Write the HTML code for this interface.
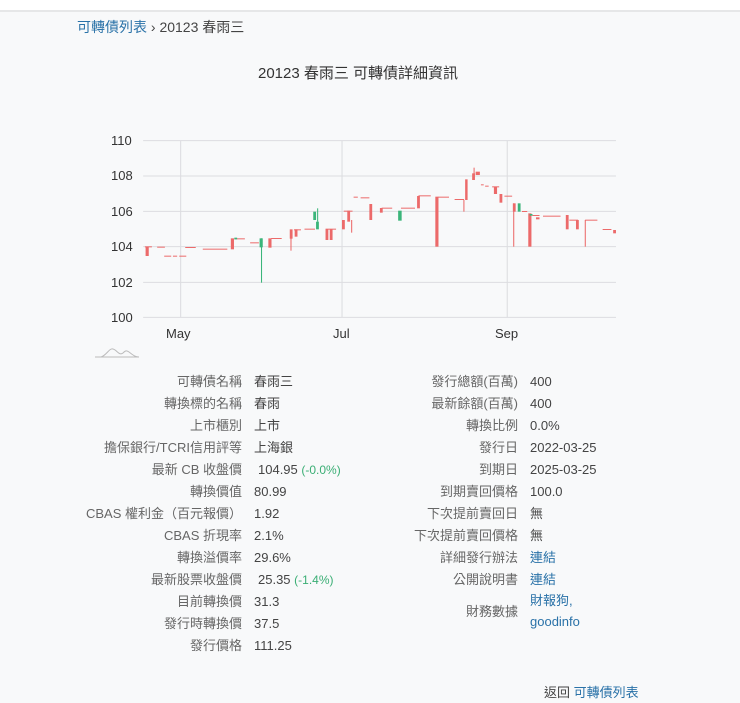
<!DOCTYPE html>
<html><head><meta charset="utf-8"><style>
body{margin:0;width:740px;height:703px;background:#f8f9fa;font-family:"Liberation Sans","Noto Sans CJK TC",sans-serif;position:relative;overflow:hidden;color:#444}
.top{position:absolute;left:0;top:0;width:740px;height:10px;background:#fff;border-bottom:2px solid #e6e7e8}
.t{position:absolute;font-size:13px;line-height:16px;white-space:nowrap}
.l{color:#666;text-align:right;width:200px}
.a{color:#2a72a8}
.g{color:#3aae74;font-size:12px}
.ax{position:absolute;font-size:13px;color:#333}
</style></head><body>
<div class="top"></div>
<div class="t" style="left:77px;top:19px;font-size:14px"><span class="a">可轉債列表</span> › 20123 春雨三</div>
<div class="t" style="left:258px;top:66px;font-size:15px;color:#333">20123 春雨三 可轉債詳細資訊</div>

<div class="ax" style="left:111px;top:133px">110</div>
<div class="ax" style="left:111px;top:168px">108</div>
<div class="ax" style="left:111px;top:204px">106</div>
<div class="ax" style="left:111px;top:239px">104</div>
<div class="ax" style="left:111px;top:275px">102</div>
<div class="ax" style="left:111px;top:310px">100</div>
<div class="ax" style="left:166px;top:326px">May</div>
<div class="ax" style="left:333px;top:326px">Jul</div>
<div class="ax" style="left:495px;top:326px">Sep</div>

<svg style="position:absolute;left:80px;top:120px" width="550" height="250" viewBox="0 0 1568 750" preserveAspectRatio="none">
<g stroke="#dcdde0" stroke-width="3">
<line x1="180" y1="62" x2="1528" y2="62"/><line x1="180" y1="168" x2="1528" y2="168"/><line x1="180" y1="274" x2="1528" y2="274"/><line x1="180" y1="380" x2="1528" y2="380"/><line x1="180" y1="487" x2="1528" y2="487"/><line x1="180" y1="592" x2="1528" y2="592"/>
<line x1="287" y1="62" x2="287" y2="592"/><line x1="747" y1="62" x2="747" y2="592"/><line x1="1218" y1="62" x2="1218" y2="592"/>
</g>
<g fill="#ec6a6a">
<rect x="187" y="380" width="9" height="28"/>
<rect x="185" y="379" width="20" height="3"/><rect x="220" y="380" width="22" height="3"/>
<rect x="240" y="407" width="20" height="3"/><rect x="265" y="407" width="12" height="3"/><rect x="283" y="407" width="20" height="3"/>
<rect x="300" y="381" width="30" height="3"/><rect x="350" y="386" width="70" height="3"/>
<rect x="430" y="355" width="9" height="33"/><rect x="440" y="355" width="30" height="3"/>
<rect x="485" y="367" width="25" height="3"/>
<rect x="537" y="355" width="9" height="28"/><rect x="545" y="354" width="30" height="3"/>
<rect x="598" y="328" width="8" height="28"/><rect x="600" y="355" width="3" height="37"/>
<rect x="612" y="328" width="8" height="22"/><rect x="610" y="328" width="20" height="3"/>
<rect x="640" y="326" width="30" height="3"/>
<rect x="700" y="328" width="8" height="32"/><rect x="712" y="328" width="8" height="32"/><rect x="700" y="326" width="30" height="3"/>
<rect x="747" y="300" width="8" height="28"/><rect x="762" y="272" width="8" height="33"/><rect x="773" y="300" width="3" height="38"/><rect x="752" y="272" width="25" height="3"/>
<rect x="780" y="230" width="12" height="3"/><rect x="800" y="232" width="25" height="3"/>
<rect x="825" y="252" width="8" height="48"/>
<rect x="855" y="264" width="8" height="14"/><rect x="860" y="263" width="30" height="3"/>
<rect x="915" y="263" width="40" height="3"/>
<rect x="961" y="228" width="8" height="37"/><rect x="965" y="226" width="35" height="3"/>
<rect x="1013" y="230" width="9" height="150"/><rect x="1020" y="230" width="32" height="3"/>
<rect x="1068" y="237" width="27" height="3"/><rect x="1093" y="240" width="3" height="35"/>
<rect x="1098" y="178" width="7" height="62"/>
<rect x="1118" y="160" width="8" height="20"/><rect x="1128" y="155" width="12" height="10"/><rect x="1122" y="143" width="3" height="20"/>
<rect x="1143" y="193" width="8" height="3"/><rect x="1155" y="197" width="10" height="3"/>
<rect x="1180" y="200" width="9" height="22"/><rect x="1175" y="199" width="20" height="3"/>
<rect x="1196" y="222" width="8" height="26"/><rect x="1210" y="227" width="22" height="3"/>
<rect x="1234" y="250" width="8" height="25"/><rect x="1235" y="250" width="3" height="130"/>
<rect x="1260" y="273" width="15" height="3"/>
<rect x="1278" y="280" width="9" height="100"/>
<rect x="1290" y="285" width="20" height="3"/><rect x="1300" y="292" width="10" height="6"/><rect x="1320" y="287" width="50" height="3"/>
<rect x="1385" y="285" width="8" height="43"/><rect x="1395" y="299" width="25" height="3"/>
<rect x="1414" y="300" width="8" height="28"/>
<rect x="1439" y="300" width="3" height="80"/><rect x="1440" y="299" width="35" height="3"/>
<rect x="1490" y="327" width="25" height="3"/><rect x="1520" y="330" width="8" height="10"/>
</g>
<g fill="#3bb57a">
<rect x="512" y="355" width="9" height="27"/><rect x="516" y="355" width="3" height="133"/>
<rect x="440" y="353" width="8" height="5"/>
<rect x="665" y="275" width="8" height="25"/><rect x="673" y="305" width="8" height="23"/><rect x="676" y="265" width="3" height="40"/>
<rect x="907" y="272" width="10" height="30"/>
<rect x="1248" y="250" width="8" height="25"/><rect x="1282" y="282" width="8" height="5"/>
</g>
</svg>
<svg style="position:absolute;left:93px;top:346px" width="50" height="14" viewBox="0 0 50 14"><path d="M2 11 H46 M8 11 C14 9 16 2 20 3 C24 4 26 10 30 7 C32 5 33 4 36 6 C40 9 42 11 46 11" fill="none" stroke="#bbb" stroke-width="1"/></svg>

<div class="t l" style="left:42px;top:374px">可轉債名稱</div><div class="t" style="left:254px;top:374px">春雨三</div>
<div class="t l" style="left:42px;top:396px">轉換標的名稱</div><div class="t" style="left:254px;top:396px">春雨</div>
<div class="t l" style="left:42px;top:418px">上市櫃別</div><div class="t" style="left:254px;top:418px">上市</div>
<div class="t l" style="left:42px;top:440px">擔保銀行/TCRI信用評等</div><div class="t" style="left:254px;top:440px">上海銀</div>
<div class="t l" style="left:42px;top:462px">最新 CB 收盤價</div><div class="t" style="left:258px;top:462px">104.95 <span class="g">(-0.0%)</span></div>
<div class="t l" style="left:42px;top:484px">轉換價值</div><div class="t" style="left:254px;top:484px">80.99</div>
<div class="t l" style="left:42px;top:506px">CBAS 權利金（百元報價）</div><div class="t" style="left:254px;top:506px">1.92</div>
<div class="t l" style="left:42px;top:528px">CBAS 折現率</div><div class="t" style="left:254px;top:528px">2.1%</div>
<div class="t l" style="left:42px;top:550px">轉換溢價率</div><div class="t" style="left:254px;top:550px">29.6%</div>
<div class="t l" style="left:42px;top:572px">最新股票收盤價</div><div class="t" style="left:258px;top:572px">25.35 <span class="g">(-1.4%)</span></div>
<div class="t l" style="left:42px;top:594px">目前轉換價</div><div class="t" style="left:254px;top:594px">31.3</div>
<div class="t l" style="left:42px;top:616px">發行時轉換價</div><div class="t" style="left:254px;top:616px">37.5</div>
<div class="t l" style="left:42px;top:638px">發行價格</div><div class="t" style="left:254px;top:638px">111.25</div>

<div class="t l" style="left:318px;top:374px">發行總額(百萬)</div><div class="t" style="left:530px;top:374px">400</div>
<div class="t l" style="left:318px;top:396px">最新餘額(百萬)</div><div class="t" style="left:530px;top:396px">400</div>
<div class="t l" style="left:318px;top:418px">轉換比例</div><div class="t" style="left:530px;top:418px">0.0%</div>
<div class="t l" style="left:318px;top:440px">發行日</div><div class="t" style="left:530px;top:440px">2022-03-25</div>
<div class="t l" style="left:318px;top:462px">到期日</div><div class="t" style="left:530px;top:462px">2025-03-25</div>
<div class="t l" style="left:318px;top:484px">到期賣回價格</div><div class="t" style="left:530px;top:484px">100.0</div>
<div class="t l" style="left:318px;top:506px">下次提前賣回日</div><div class="t" style="left:530px;top:506px">無</div>
<div class="t l" style="left:318px;top:528px">下次提前賣回價格</div><div class="t" style="left:530px;top:528px">無</div>
<div class="t l" style="left:318px;top:550px">詳細發行辦法</div><div class="t a" style="left:530px;top:550px">連結</div>
<div class="t l" style="left:318px;top:572px">公開說明書</div><div class="t a" style="left:530px;top:572px">連結</div>
<div class="t l" style="left:318px;top:604px">財務數據</div><div class="t a" style="left:530px;top:593px">財報狗,</div><div class="t a" style="left:530px;top:614px">goodinfo</div>

<div class="t" style="left:544px;top:685px">返回 <span class="a">可轉債列表</span></div>
</body></html>
